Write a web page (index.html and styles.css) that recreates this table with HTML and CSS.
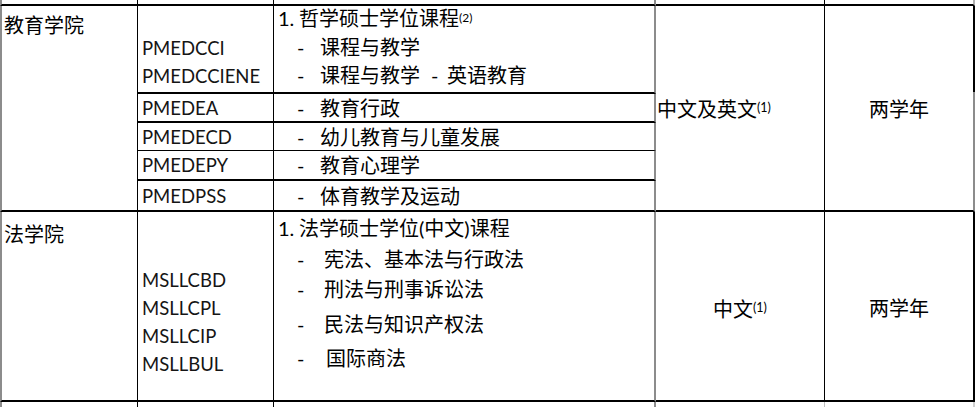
FILE: index.html
```html
<!DOCTYPE html>
<html lang="zh">
<head>
<meta charset="utf-8">
<title>课程表</title>
<link rel="stylesheet" href="styles.css">
</head>
<body>
<div class="sheet">
  <!-- strip of previous row -->
  <div class="cell c1 strip-top"></div>
  <div class="cell c2 strip-top"></div>
  <div class="cell c3 strip-top"></div>
  <div class="cell c4 strip-top"></div>
  <div class="cell c5 strip-top"></div>

  <!-- 教育学院 -->
  <div class="cell c1 faculty g1">教育学院</div>

  <div class="cell c2 codes-a ra">
    <div class="code">PMEDCCI</div>
    <div class="code">PMEDCCIENE</div>
  </div>
  <div class="cell c3 prog-a ra">
    <div class="first"><span class="num">1.</span>哲学硕士学位课程<sup class="note note-a">(2)</sup></div>
    <div class="item gap3"><span class="dash">-</span>课程与教学</div>
    <div class="item"><span class="dash">-</span>课程与教学<span class="dash mid">-</span>英语教育</div>
  </div>

  <div class="cell c2 mid-row rb thick"><span class="code">PMEDEA</span></div>
  <div class="cell c3 mid-row rb thick"><div class="item"><span class="dash">-</span>教育行政</div></div>

  <div class="cell c2 mid-row rc thin"><span class="code">PMEDECD</span></div>
  <div class="cell c3 mid-row rc thin"><div class="item"><span class="dash">-</span>幼儿教育与儿童发展</div></div>

  <div class="cell c2 mid-row rd thick"><span class="code">PMEDEPY</span></div>
  <div class="cell c3 mid-row rd thick"><div class="item"><span class="dash">-</span>教育心理学</div></div>

  <div class="cell c2 mid-row re thick"><span class="code">PMEDPSS</span></div>
  <div class="cell c3 mid-row re thick"><div class="item"><span class="dash">-</span>体育教学及运动</div></div>

  <div class="cell c4 lang g1 lang-left">中文及英文<sup class="note">(1)</sup></div>
  <div class="cell c5 dur g1 dur-first">两学年</div>

  <!-- 法学院 -->
  <div class="cell c1 faculty law r2">法学院</div>
  <div class="cell c2 codes-b r2">
    <div class="code">MSLLCBD</div>
    <div class="code">MSLLCPL</div>
    <div class="code">MSLLCIP</div>
    <div class="code">MSLLBUL</div>
  </div>
  <div class="cell c3 prog-b r2">
    <div class="first-b"><span class="num">1.</span>法学硕士学位(中文)课程</div>
    <div class="item g3"><span class="dash wide">-</span>宪法、基本法与行政法</div>
    <div class="item g2"><span class="dash wide">-</span>刑法与刑事诉讼法</div>
    <div class="item g7"><span class="dash wide">-</span>民法与知识产权法</div>
    <div class="item g6"><span class="dash wider">-</span>国际商法</div>
  </div>
  <div class="cell c4 lang r2 lang-law">中文<sup class="note">(1)</sup></div>
  <div class="cell c5 dur r2 dur-law">两学年</div>

  <!-- strip of next row -->
  <div class="cell c1 strip-bottom"></div>
  <div class="cell c2 strip-bottom"></div>
  <div class="cell c3 strip-bottom"></div>
  <div class="cell c4 strip-bottom"></div>
  <div class="cell c5 strip-bottom"></div>
</div>
</body>
</html>
```

FILE: styles.css
```css
* { box-sizing: border-box; }

html, body {
  margin: 0;
  padding: 0;
  background: #ffffff;
}

body {
  font-family: "Lato", "Noto Sans CJK SC", sans-serif;
  font-size: 20px;
  color: #000;
  width: 980px;
  height: 407px;
  overflow: hidden;
}

.sheet {
  display: grid;
  grid-template-columns: 138px 136px 382px 169px 150px;
  grid-template-rows: 6px 88px 29px 28px 30px 31px 190px 5px;
}

.cell {
  border-right: 1px solid #000;
  min-width: 0;
}

.c1 { grid-column: 1; border-left: 2px solid #8c8c8c; border-right: 1px solid #000; }
.c2 { grid-column: 2; }
.c3 { grid-column: 3; border-right: 2px solid #8c8c8c; }
.c4 { grid-column: 4; }
.c5 { grid-column: 5; border-right: 2px solid #000; }

.strip-top { grid-row: 1; border-bottom: 2px solid #000; }
.strip-top.c5 { border-right-color: #b0b0b0; }
.strip-bottom { grid-row: 8; }
.strip-bottom.c5 { border-right-color: #d0d0d0; }
.strip-bottom.c4 { border-right-color: #c0c0c0; }

.g1 { grid-row: 2 / span 5; border-bottom: 2px solid #000; }
.ra { grid-row: 2; border-bottom: 2px solid #000; }
.rb { grid-row: 3; }
.rc { grid-row: 4; }
.rd { grid-row: 5; }
.re { grid-row: 6; }
.r2 { grid-row: 7; border-bottom: 2px solid #000; }

.thick { border-bottom: 2px solid #000; }
.thin { border-bottom: 1px solid #000; }

/* faculty column */
.faculty {
  line-height: 28px;
  padding: 5px 0 0 2px;
}
.faculty.law { padding-top: 8px; }

/* code column */
.code {
  font-size: 18.5px;
  color: #151515;
  line-height: 28px;
  white-space: nowrap;
}
.codes-a {
  display: flex;
  flex-direction: column;
  justify-content: flex-end;
  padding: 0 0 2px 4px;
}
.codes-b {
  padding: 54px 0 0 4px;
}

.mid-row {
  display: flex;
  align-items: center;
  padding-left: 4px;
}

/* programme column */
.prog-a, .prog-b { padding-left: 4px; }
.prog-b { padding-top: 2px; }

.first { line-height: 24px; white-space: nowrap; }
.first-b { line-height: 28px; white-space: nowrap; }
.num {
  display: inline-block;
  width: 21px;
}
.item {
  line-height: 28px;
  padding-left: 19px;
  white-space: nowrap;
}
.gap3 { margin-top: 3px; }
.g3 { margin-top: 3px; }
.g2 { margin-top: 2px; }
.g7 { margin-top: 7px; }
.g6 { margin-top: 6px; }

.dash {
  display: inline-block;
  width: 23px;
}
.dash.wide { width: 27px; }
.dash.wider { width: 29px; }
.dash.mid {
  width: 16px;
  margin-left: 11px;
}

.note {
  font-size: 12.5px;
  line-height: 1;
  vertical-align: 3px;
}
.note-a { font-size: 12px; vertical-align: 4px; }

/* language column */
.lang {
  display: flex;
  align-items: center;
  white-space: nowrap;
}
.lang-left { padding-left: 1px; }
.lang-law { justify-content: center; padding-top: 4px; }

/* duration column */
.dur {
  display: flex;
  align-items: center;
  justify-content: center;
}
.dur-first {
  border-right: 2px solid transparent;
  background-image:
    linear-gradient(#000, #000),
    linear-gradient(#8c8c8c, #8c8c8c);
  background-origin: border-box;
  background-repeat: no-repeat;
  background-position: right top, right top;
  background-size: 2px 86px, 2px 100%;
}
.dur-law { padding-top: 3px; }
```
